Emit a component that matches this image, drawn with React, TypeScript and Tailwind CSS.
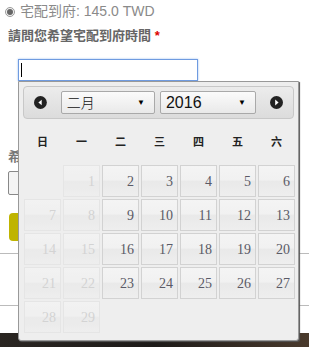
const weekdays = ["日", "一", "二", "三", "四", "五", "六"];

type Day = { n: number; off: boolean } | null;

function buildWeeks(): Day[][] {
  const days: Day[] = [null];
  for (let n = 1; n <= 29; n++) {
    // 1, 7, 8, 14, 15 ... are not selectable
    const col = n % 7;
    days.push({ n, off: n === 1 || col === 0 || col === 1 });
  }
  const weeks: Day[][] = [];
  for (let i = 0; i < days.length; i += 7) weeks.push(days.slice(i, i + 7));
  return weeks;
}

function CircleArrow({ dir }: { dir: "left" | "right" }) {
  return (
    <svg width="13" height="13" viewBox="0 0 13 13">
      <circle cx="6.5" cy="6.5" r="6.5" fill="#222" />
      {dir === "left" ? (
        <polygon points="7.8,3.6 7.8,9.4 4.4,6.5" fill="#fff" />
      ) : (
        <polygon points="5.2,3.6 5.2,9.4 8.6,6.5" fill="#fff" />
      )}
    </svg>
  );
}

function FakeSelect({ label, className, labelClass }: { label: string; className: string; labelClass: string }) {
  return (
    <div
      className={`flex h-[23px] items-center justify-between rounded-[2px] border border-[#a9a9a9] bg-gradient-to-b from-[#fbfbfb] to-[#e9e9e9] pl-[5px] pr-[9px] ${className}`}
    >
      <span className={labelClass}>{label}</span>
      <span className="text-[8px] leading-none text-black">▼</span>
    </div>
  );
}

export default function App() {
  const weeks = buildWeeks();
  return (
    <div className="relative h-[347px] w-[309px] overflow-hidden bg-white font-['Liberation_Sans','Noto_Sans_CJK_TC',sans-serif]">
      <div className="flex items-center gap-[5px] pl-[5px] pt-[3px]">
        <span className="flex h-[10px] w-[10px] items-center justify-center rounded-full border border-[#9a9a9a] bg-[#f3f3f3]">
          <span className="h-[6px] w-[6px] rounded-full bg-[#666]" />
        </span>
        <span className="text-[14px] leading-[17px] text-[#8a8a8a]">宅配到府: 145.0 TWD</span>
      </div>
      <div className="mt-[8px] pl-[8px] text-[13px] font-bold leading-[16px] text-[#666]">
        請問您希望宅配到府時間 <span className="text-[#d00]">*</span>
      </div>
      <div className="ml-[18px] mt-[15px] flex h-[22px] w-[180px] items-center border border-[#6f9be0] bg-white pl-[2px] shadow-[0_0_2px_#9dbdf0]">
        <span className="h-[14px] w-px bg-black" />
      </div>

      <div className="mt-[68px] pl-[8px] text-[13px] font-bold leading-[16px] text-[#777]">希望配送時段</div>
      <div className="ml-[8px] mt-[6px] h-[24px] w-[60px] rounded-[2px] border border-[#888] bg-[#f4f4f4]" />
      <div className="ml-[9px] mt-[18px] h-[28px] w-[60px] rounded-[4px] bg-[#bfb400]" />
      <div className="mt-[12px] h-px bg-[#bbb]" />
      <div className="mt-[51px] h-px bg-[#bbb]" />
      <div className="mt-[27px] h-[14px] bg-gradient-to-r from-[#2a2622] via-[#1d1a18] to-[#4a3a2c]" />

      <div className="absolute left-[18px] top-[81px] h-[260px] w-[281px] rounded-b-[3px] border border-[#999] bg-[#eee] px-[4px] pt-[4px] shadow-[1px_1px_1px_#555]">
        <div className="flex h-[33px] items-center rounded-[4px] border border-[#c8c8c8] bg-gradient-to-b from-[#ececec] to-[#dcdcdc] px-[10px]">
          <CircleArrow dir="left" />
          <FakeSelect
            label="二月"
            className="ml-[14px] w-[95px]"
            labelClass="font-['Noto_Sans_CJK_TC',serif] text-[14px] font-light text-[#111]"
          />
          <FakeSelect label="2016" className="ml-[5px] w-[97px]" labelClass="text-[16px] text-[#111]" />
          <span className="ml-[14px]">
            <CircleArrow dir="right" />
          </span>
        </div>
        <div className="mt-[13px] grid grid-cols-[repeat(7,37px)] gap-x-[2px] pl-px">
          {weekdays.map((w) => (
            <div key={w} className="text-center text-[11px] font-bold leading-[20px] text-[#222]">
              {w}
            </div>
          ))}
        </div>
        <div className="mt-[13px] grid grid-cols-[repeat(7,37px)] gap-[2px] pl-px">
          {weeks.flat().map((d, i) =>
            d ? (
              <div
                key={i}
                className={`flex h-[32px] items-center justify-end border bg-[linear-gradient(#f4f4f4_0%,#f1f1f1_46%,#e9e9e9_52%,#eeeeee_100%)] pr-[4px] font-['Liberation_Serif',serif] text-[14px] ${
                  d.off ? "border-[#e2e2e2] text-[#c8c8c8] opacity-70" : "border-[#d2d2d2] text-[#5a5a66]"
                }`}
              >
                {d.n}
              </div>
            ) : (
              <div key={i} className="h-[32px]" />
            )
          )}
        </div>
      </div>
    </div>
  );
}
